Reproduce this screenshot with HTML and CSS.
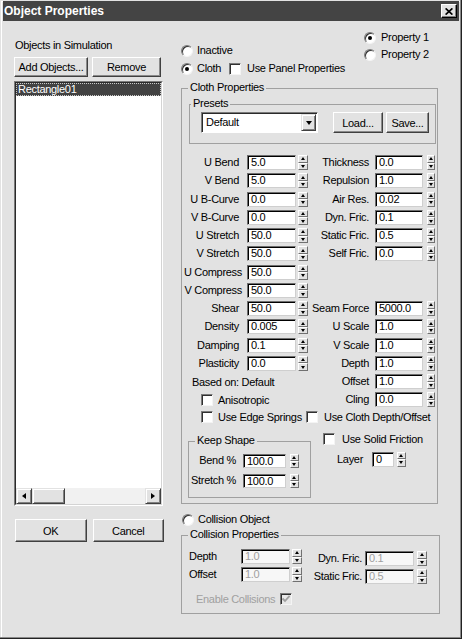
FILE: index.html
```html
<!DOCTYPE html>
<html>
<head>
<meta charset="utf-8">
<title>Object Properties</title>
<link rel="stylesheet" href="styles.css">
</head>
<body>
<div class="window">
  <div class="titlebar">
    <span class="title">Object Properties</span>
    <span class="close"><svg width="8" height="7" viewBox="0 0 8 7"><path d="M0.6 0.4 L7.4 6.6 M7.4 0.4 L0.6 6.6" stroke="#000" stroke-width="1.7"/></svg></span>
  </div>
  <div class="content">
    <div class="leftcol">
      <div class="objlabel">Objects in Simulation</div>
      <div class="btnrow">
        <button class="btn btn-add">Add Objects...</button>
        <button class="btn btn-remove">Remove</button>
      </div>
      <div class="listbox">
        <div class="listinner">
          <div class="listitem">Rectangle01</div>
          <div class="listfill"></div>
          <div class="hscroll">
            <span class="raised sbtn"><i class="tri-left"></i></span>
            <span class="raised sthumb"></span>
            <span class="strack"></span>
            <span class="raised sbtn"><i class="tri-right"></i></span>
          </div>
        </div>
      </div>
      <div class="okrow">
        <button class="btn btn-ok">OK</button>
        <button class="btn btn-ok">Cancel</button>
      </div>
    </div>

    <div class="rightcol">
      <div class="toparea">
        <div class="modes">
          <div class="opt"><span class="radio"></span><span>Inactive</span></div>
          <div class="opt"><span class="radio on"></span><span class="clothlabel">Cloth</span><span class="check"></span><span class="checktext">Use Panel Properties</span></div>
        </div>
        <div class="props">
          <div class="opt"><span class="radio on"></span><span>Property 1</span></div>
          <div class="opt"><span class="radio"></span><span>Property 2</span></div>
        </div>
      </div>

      <div class="group cloth">
        <span class="legend">Cloth Properties</span>
        <div class="group presets">
          <span class="legend legend-presets">Presets</span>
          <div class="presetrow">
            <div class="combo"><span class="combotext">Default</span><span class="raised combobtn"><i class="tri-down"></i></span></div>
            <button class="btn btn-load">Load...</button>
            <button class="btn btn-save">Save...</button>
          </div>
        </div>

        <div class="params">
          <div class="pcol pcol-left">
            <div class="prow"><span class="plabel">U Bend</span><span class="field">5.0</span><span class="spin"><i></i><i></i></span></div>
            <div class="prow"><span class="plabel">V Bend</span><span class="field">5.0</span><span class="spin"><i></i><i></i></span></div>
            <div class="prow"><span class="plabel">U B-Curve</span><span class="field">0.0</span><span class="spin"><i></i><i></i></span></div>
            <div class="prow"><span class="plabel">V B-Curve</span><span class="field">0.0</span><span class="spin"><i></i><i></i></span></div>
            <div class="prow"><span class="plabel">U Stretch</span><span class="field">50.0</span><span class="spin"><i></i><i></i></span></div>
            <div class="prow"><span class="plabel">V Stretch</span><span class="field">50.0</span><span class="spin"><i></i><i></i></span></div>
            <div class="prow"><span class="plabel wide">U Compress</span><span class="field">50.0</span><span class="spin"><i></i><i></i></span></div>
            <div class="prow"><span class="plabel wide">V Compress</span><span class="field">50.0</span><span class="spin"><i></i><i></i></span></div>
            <div class="prow"><span class="plabel">Shear</span><span class="field">50.0</span><span class="spin"><i></i><i></i></span></div>
            <div class="prow"><span class="plabel">Density</span><span class="field">0.005</span><span class="spin"><i></i><i></i></span></div>
            <div class="prow"><span class="plabel">Damping</span><span class="field">0.1</span><span class="spin"><i></i><i></i></span></div>
            <div class="prow"><span class="plabel">Plasticity</span><span class="field">0.0</span><span class="spin"><i></i><i></i></span></div>
            <div class="prow based">Based on: Default</div>
            <div class="prow aniso"><span class="check"></span><span class="checktext">Anisotropic</span></div>
          </div>
          <div class="pcol pcol-right">
            <div class="prow"><span class="plabel">Thickness</span><span class="field">0.0</span><span class="spin"><i></i><i></i></span></div>
            <div class="prow"><span class="plabel">Repulsion</span><span class="field">1.0</span><span class="spin"><i></i><i></i></span></div>
            <div class="prow"><span class="plabel">Air Res.</span><span class="field">0.02</span><span class="spin"><i></i><i></i></span></div>
            <div class="prow"><span class="plabel">Dyn. Fric.</span><span class="field">0.1</span><span class="spin"><i></i><i></i></span></div>
            <div class="prow"><span class="plabel">Static Fric.</span><span class="field">0.5</span><span class="spin"><i></i><i></i></span></div>
            <div class="prow"><span class="plabel">Self Fric.</span><span class="field">0.0</span><span class="spin"><i></i><i></i></span></div>
            <div class="pspacer"></div>
            <div class="prow"><span class="plabel">Seam Force</span><span class="field">5000.0</span><span class="spin"><i></i><i></i></span></div>
            <div class="prow"><span class="plabel">U Scale</span><span class="field">1.0</span><span class="spin"><i></i><i></i></span></div>
            <div class="prow"><span class="plabel">V Scale</span><span class="field">1.0</span><span class="spin"><i></i><i></i></span></div>
            <div class="prow"><span class="plabel">Depth</span><span class="field">1.0</span><span class="spin"><i></i><i></i></span></div>
            <div class="prow"><span class="plabel">Offset</span><span class="field">1.0</span><span class="spin"><i></i><i></i></span></div>
            <div class="prow"><span class="plabel">Cling</span><span class="field">0.0</span><span class="spin"><i></i><i></i></span></div>
          </div>
        </div>

        <div class="edgerow">
          <div class="cbitem edge1"><span class="check"></span><span class="checktext">Use Edge Springs</span></div>
          <div class="cbitem edge2"><span class="check"></span><span class="checktext">Use Cloth Depth/Offset</span></div>
        </div>

        <div class="bottomarea">
          <div class="group keepshape">
            <span class="legend">Keep Shape</span>
            <div class="ksrow"><span class="plabel">Bend %</span><span class="field">100.0</span><span class="spin"><i></i><i></i></span></div>
            <div class="ksrow"><span class="plabel">Stretch %</span><span class="field">100.0</span><span class="spin"><i></i><i></i></span></div>
          </div>
          <div class="rightbottom">
            <div class="cbitem solid"><span class="check"></span><span class="checktext">Use Solid Friction</span></div>
            <div class="layerrow"><span class="layerlabel">Layer</span><span class="field">0</span><span class="spin"><i></i><i></i></span></div>
          </div>
        </div>
      </div>

      <div class="opt collrow"><span class="radio"></span><span>Collision Object</span></div>

      <div class="group collision">
        <span class="legend">Collision Properties</span>
        <div class="ccols">
          <div class="ccol-left">
            <div class="crow"><span class="plabel">Depth</span><span class="field dis">1.0</span><span class="spin"><i></i><i></i></span></div>
            <div class="crow"><span class="plabel">Offset</span><span class="field dis">1.0</span><span class="spin"><i></i><i></i></span></div>
          </div>
          <div class="ccol-right">
            <div class="crow"><span class="plabel">Dyn. Fric.</span><span class="field dis">0.1</span><span class="spin"><i></i><i></i></span></div>
            <div class="crow"><span class="plabel">Static Fric.</span><span class="field dis">0.5</span><span class="spin"><i></i><i></i></span></div>
          </div>
        </div>
        <div class="enable"><span class="enabletext">Enable Collisions</span><span class="check dis"><svg width="10" height="10" viewBox="0 0 10 10"><path d="M1.5 4.5 L4 7 L8.6 1.8" fill="none" stroke="#a0a0a0" stroke-width="1.8"/></svg></span></div>
      </div>
    </div>
  </div>
</div>
</body>
</html>
```

FILE: styles.css
```css
* { box-sizing: border-box; }
html, body { margin: 0; padding: 0; }
body {
  width: 462px;
  height: 639px;
  overflow: hidden;
  background: #e2e2e2;
  font-family: "Liberation Sans", Arial, sans-serif;
  font-size: 11px;
  letter-spacing: -0.3px;
  color: #000;
}
.window {
  width: 462px;
  height: 639px;
  background: #e2e2e2;
  padding: 1px 3px 0 3px;
  box-shadow: inset -1px -1px #222, inset -2px -2px #8a8a8a, inset 1px 1px #e2e2e2, inset 2px 2px #fff;
}
.titlebar {
  height: 20px;
  background: #444;
  display: flex;
  align-items: center;
  justify-content: space-between;
  padding: 0 2px 0 1px;
}
.title {
  color: #fff;
  font-weight: bold;
  font-size: 12px;
  letter-spacing: 0;
  line-height: 14px;
}
.close {
  width: 16px;
  height: 14px;
  background: #e2e2e2;
  display: flex;
  align-items: center;
  justify-content: center;
  border: 1px solid;
  border-color: #fff #000 #000 #fff;
  box-shadow: inset -1px -1px #808080;
}
.close svg { display: block; }

.content { display: flex; padding-left: 11px; }

/* left column */
.leftcol { width: 156px; display: flex; flex-direction: column; }
.objlabel { margin-top: 18px; padding-left: 1px; height: 13px; line-height: 13px; }
.btnrow { display: flex; margin-top: 5px; height: 20px; }
.btn {
  font: inherit;
  letter-spacing: inherit;
  color: #000;
  background: #e2e2e2;
  border: 1px solid;
  border-color: #fff #404040 #404040 #fff;
  box-shadow: inset -1px -1px #8a8a8a;
  border-radius: 0;
  padding: 0;
  margin: 0;
  display: flex;
  align-items: center;
  justify-content: center;
  white-space: nowrap;
}
.btn-add { width: 74px; height: 20px; }
.btn-remove { width: 69px; height: 20px; margin-left: 4px; }
.listbox {
  margin-top: 4px;
  width: 149px;
  height: 425px;
  border: 1px solid;
  border-color: #7a7a7a #fff #fff #7a7a7a;
}
.listinner {
  height: 100%;
  border: 1px solid;
  border-color: #2a2a2a #d4d4d4 #d4d4d4 #2a2a2a;
  background: #fff;
  display: flex;
  flex-direction: column;
}
.listitem {
  height: 13px;
  line-height: 11px;
  background: #424242;
  color: #fff;
  border: 1px dotted #c8c8c8;
  padding-left: 1px;
}
.listfill { flex: 1; }
.hscroll { height: 16px; display: flex; }
.raised {
  background: #e2e2e2;
  border: 1px solid;
  border-color: #e2e2e2 #404040 #404040 #e2e2e2;
  box-shadow: inset 1px 1px #fff, inset -1px -1px #808080;
}
.sbtn { width: 16px; height: 16px; display: flex; align-items: center; justify-content: center; }
.sthumb { width: 33px; height: 16px; }
.strack { flex: 1; background: #f1f1f1; }
.tri-left { width: 0; height: 0; border-top: 3.5px solid transparent; border-bottom: 3.5px solid transparent; border-right: 4px solid #000; }
.tri-right { width: 0; height: 0; border-top: 3.5px solid transparent; border-bottom: 3.5px solid transparent; border-left: 4px solid #000; }
.tri-down { width: 0; height: 0; border-left: 3.5px solid transparent; border-right: 3.5px solid transparent; border-top: 4px solid #000; }
.okrow { display: flex; margin-top: 13px; padding-left: 1px; }
.btn-ok { width: 75px; height: 23px; margin-right: 6px; }

/* right column */
.rightcol { width: 259px; margin-left: 11px; }
.toparea { display: flex; height: 67px; }
.modes { width: 183px; padding-top: 23px; display: flex; flex-direction: column; gap: 5px; }
.props { padding-top: 10px; display: flex; flex-direction: column; gap: 4px; }
.opt { display: flex; align-items: center; height: 13px; line-height: 13px; white-space: nowrap; }
.radio {
  position: relative;
  flex: none;
  width: 12px;
  height: 12px;
  border-radius: 50%;
  background: #fff;
  border: 1px solid;
  border-color: #7a7a7a #f4f4f4 #f4f4f4 #7a7a7a;
  box-shadow: inset 1px 1px #303030;
  margin-right: 4px;
}
.radio.on::after {
  content: "";
  position: absolute;
  left: 3px;
  top: 3px;
  width: 4px;
  height: 4px;
  border-radius: 50%;
  background: #000;
}
.props .radio { margin-right: 5px; }
.clothlabel { width: 32px; }
.check {
  flex: none;
  width: 12px;
  height: 12px;
  background: #fff;
  border: 1px solid;
  border-color: #7a7a7a #f4f4f4 #f4f4f4 #7a7a7a;
  box-shadow: inset 1px 1px #303030;
  display: flex;
  align-items: center;
  justify-content: center;
}
.check.dis { background: #e8e8e8; }
.checktext { margin-left: 6px; white-space: nowrap; }

.group { position: relative; border: 1px solid #a0a0a0; }
.legend {
  position: absolute;
  top: -8px;
  left: 6px;
  padding: 0 2px;
  line-height: 13px;
  background: #e2e2e2;
  white-space: nowrap;
}
.legend-presets { left: 1px; }
.cloth { width: 257px; height: 416px; }
.presets { margin: 15px 0 0 7px; width: 247px; height: 40px; padding: 7px 0 0 11px; }
.presetrow { display: flex; align-items: flex-start; }
.combo {
  width: 117px;
  height: 21px;
  display: flex;
  align-items: center;
  background: #fff;
  border: 1px solid;
  border-color: #7a7a7a #fff #fff #7a7a7a;
  box-shadow: inset 1px 1px #2a2a2a;
  padding: 1px;
}
.combotext { flex: 1; padding-left: 3px; line-height: 17px; }
.combobtn { width: 15px; height: 17px; display: flex; align-items: center; justify-content: center; }
.btn-load { width: 50px; height: 21px; margin-left: 15px; }
.btn-save { width: 43px; height: 21px; margin-left: 3px; }

.params { display: flex; margin-top: 11px; }
.pcol-left { width: 128px; }
.pcol-right { width: 127px; }
.prow { display: flex; align-items: center; height: 15px; margin-bottom: 3.27px; white-space: nowrap; }
.pspacer { height: 36.54px; }
.plabel { text-align: right; white-space: nowrap; line-height: 15px; flex: none; }
.pcol-left .plabel { width: 57px; margin-right: 8px; }
.pcol-left .plabel.wide { width: 60px; margin-right: 5px; }
.pcol-right .plabel { width: 59px; margin-right: 6px; }
.field {
  flex: none;
  height: 15px;
  width: 49px;
  background: #fff;
  border: 1px solid;
  border-color: #6e6e6e #cfcfcf #cfcfcf #6e6e6e;
  box-shadow: inset 1px 1px #000;
  padding-left: 3px;
  line-height: 13px;
  white-space: nowrap;
  overflow: hidden;
}
.field.dis { color: #a0a0a0; background: #f7f7f7; }
.pcol-right .field { width: 48px; }
.spin { flex: none; display: flex; flex-direction: column; width: 10px; height: 15px; margin-left: 2px; }
.spin i {
  flex: 1;
  position: relative;
  background: #e2e2e2;
  border: 1px solid;
  border-color: #fff #707070 #707070 #fff;
}
.spin i::after {
  content: "";
  position: absolute;
  left: 50%;
  top: 50%;
  margin-left: -2.5px;
  margin-top: -1.5px;
  border-left: 2.5px solid transparent;
  border-right: 2.5px solid transparent;
  border-bottom: 3px solid #000;
}
.spin i + i::after { border-bottom: 0; border-top: 3px solid #000; }
.pcol-right .spin { width: 8px; margin-left: 4px; }
.based { padding-left: 10px; }
.aniso { padding-left: 19px; }
.aniso .checktext { margin-left: 5px; }

.edgerow { display: flex; align-items: center; height: 13px; padding-left: 19px; }
.cbitem { display: flex; align-items: center; height: 13px; }
.edge1 { width: 105px; }
.edge1 .checktext { margin-left: 5px; }

.bottomarea { display: flex; }
.keepshape { margin: 17px 0 0 6px; width: 123px; height: 57px; padding-top: 12px; }
.ksrow { display: flex; align-items: center; height: 14px; }
.ksrow + .ksrow { margin-top: 6px; }
.ksrow .plabel { width: 47px; margin-right: 7px; }
.ksrow .field { width: 43px; height: 14px; line-height: 12px; }
.ksrow .spin { width: 9px; height: 14px; margin-left: 4px; }
.rightbottom { margin-left: 12px; padding-top: 9px; }
.solid .checktext { margin-left: 7px; }
.layerrow { display: flex; align-items: center; height: 15px; margin-top: 6px; padding-left: 14px; }
.layerlabel { width: 35px; }
.layerrow .field { width: 22px; }
.layerrow .spin { width: 9px; margin-left: 3px; }

.collrow { margin-top: 9px; padding-left: 1px; }
.collision { margin-top: 9px; width: 259px; height: 79px; padding-top: 13px; }
.ccols { display: flex; }
.ccol-left { width: 120px; padding-left: 7px; }
.ccol-right { margin-top: 2px; }
.crow { display: flex; align-items: center; height: 15px; margin-bottom: 3px; }
.ccol-left .plabel { width: 52px; text-align: left; }
.ccol-right .plabel { width: 60px; margin-right: 3px; }
.ccol-right .spin { margin-left: 3px; }
.enable { display: flex; align-items: center; height: 13px; margin-top: 5px; padding-left: 14px; color: #a0a0a0; }
.enabletext { margin-right: 5px; white-space: nowrap; }
```
